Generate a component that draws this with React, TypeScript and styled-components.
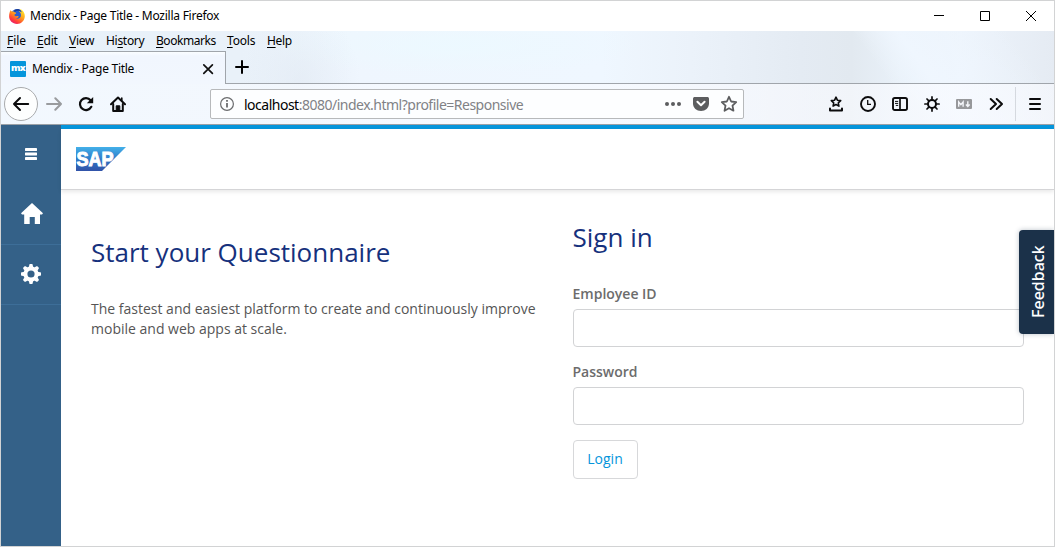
import React from "react";
import styled, { createGlobalStyle } from "styled-components";

const GlobalStyle = createGlobalStyle`
  *, *::before, *::after { box-sizing: border-box; }
  body { margin: 0; background: #fff; font-family: "Open Sans", "Noto Sans", sans-serif; }
  h1, h2, p { margin: 0; }
  svg { display: block; }
`;

const BrowserWindow = styled.div`
  width: 1055px;
  height: 547px;
  border: 1px solid #d2d3d4;
  display: flex;
  flex-direction: column;
  overflow: hidden;
  background: #fff;
`;

const TitleBar = styled.div`
  height: 30px;
  display: flex;
  align-items: center;
  padding-left: 8px;
  font: 12px/16px "Noto Sans", sans-serif;
  letter-spacing: -0.25px;
  color: #000;
`;

const TitleText = styled.span`
  flex: 1;
  padding-left: 5px;
`;

const WindowButton = styled.span`
  width: 46px;
  height: 30px;
  display: flex;
  align-items: center;
  justify-content: center;
`;

const Chrome = styled.div`
  height: 94px;
  display: flex;
  flex-direction: column;
  border-bottom: 1px solid #9ba0a6;
  background:
    radial-gradient(ellipse 60px 70px at 300px 50px, rgba(220, 228, 238, 0.4), transparent),
    radial-gradient(ellipse 190px 30px at 455px 14px, rgba(236, 249, 255, 0.9), transparent),
    linear-gradient(54deg, transparent 0 82%, rgba(240, 247, 255, 0.85) 86%, transparent 96%) 0 0 / 1053px 94px no-repeat,
    linear-gradient(90deg, #e8f1f9 0, #e9f1f9 240px, #eff6fe 350px, #eff7ff 600px, #ebf2fa 690px, #e4ebf3 800px, #e2e9f0 850px, #e9f1f9 900px, #edf4fc 960px, #e5ebf3 1053px);
`;

const MenuBar = styled.div`
  height: 20px;
  display: flex;
  align-items: center;
  padding-left: 6px;
  gap: 12px;
  font: 12px/20px "Noto Sans", sans-serif;
  color: #000;
`;

const MenuItem = styled.span<{ $width: number; $spacing: number }>`
  width: ${(p) => p.$width}px;
  letter-spacing: ${(p) => p.$spacing}px;
  white-space: nowrap;
  u { text-underline-offset: 2px; text-decoration-thickness: 1px; }
`;

const TabStrip = styled.div`
  height: 33px;
  display: flex;
`;

const Tab = styled.div`
  width: 225px;
  height: 33px;
  display: flex;
  align-items: center;
  padding: 1px 11px 0 9px;
  border-top: 1px solid #a0a5ab;
  border-right: 1px solid #a0a5ab;
  background: linear-gradient(#fafdff 0, #f1f6fe 4px, #f2f7fe);
  font: 12px/16px "Noto Sans", sans-serif;
  letter-spacing: -0.27px;
`;

const Favicon = styled.span`
  width: 16px;
  height: 16px;
  border-radius: 1px;
  background: #0595db;
  color: #fff;
  font: 800 9.5px/14px "Open Sans", sans-serif;
  letter-spacing: -0.7px;
  text-align: center;
`;

const TabTitle = styled.span`
  flex: 1;
  padding-left: 6px;
`;

const TabSpace = styled.div`
  flex: 1;
  border-bottom: 1px solid #a0a5ab;
  padding: 8px 0 0 8px;
`;

const Toolbar = styled.div`
  height: 40px;
  display: flex;
  align-items: center;
  padding-left: 3px;
  background: linear-gradient(90deg, rgba(244, 249, 255, 0.85) 0, rgba(250, 251, 255, 0.65) 700px, rgba(250, 251, 255, 0.6));
`;

const BackButton = styled.span`
  width: 34px;
  height: 34px;
  border-radius: 50%;
  border: 1px solid #a9abad;
  background: #fdfefe;
  display: flex;
  align-items: center;
  justify-content: center;
`;

const ToolButton = styled.span<{ $color?: string }>`
  width: 32px;
  height: 32px;
  display: flex;
  align-items: center;
  justify-content: center;
  color: ${(p) => p.$color ?? "#0c0c0d"};
`;

const UrlBar = styled.div`
  width: 534px;
  height: 30px;
  margin: 0 76px 0 76px;
  border: 1px solid #b7b9bb;
  border-radius: 2px;
  background: #fdfeff;
  display: flex;
  align-items: center;
  padding: 0 0 0 8px;
`;

const Address = styled.span`
  flex: 1;
  padding: 2px 0 0 9px;
  font: 14px/20px "Noto Sans", sans-serif;
  letter-spacing: -0.5px;
  color: #818286;
  b { font-weight: 400; color: #000; }
`;

const UrlAction = styled.span`
  width: 28px;
  display: flex;
  justify-content: center;
`;

const Divider = styled.span`
  width: 1px;
  height: 34px;
  margin: 0 3px;
  background: #d5d9df;
`;

const Page = styled.div`
  position: relative;
  flex: 1;
  display: flex;
`;

const Sidebar = styled.nav`
  width: 60px;
  background: #346188;
`;

const SideItem = styled.div<{ $line?: boolean }>`
  height: 60px;
  display: flex;
  align-items: center;
  justify-content: center;
  padding-bottom: 1px;
  border-bottom: 1px solid ${(p) => (p.$line ? "#3d6e98" : "transparent")};
`;

const Main = styled.main`
  flex: 1;
  display: flex;
  flex-direction: column;
  border-top: 4px solid #0595db;
`;

const PageHeader = styled.header`
  height: 61px;
  padding: 18px 15px;
  border-bottom: 1px solid #d5d5d7;
  box-shadow: 0 2px 4px rgba(0, 0, 0, 0.09);
`;

const Columns = styled.div`
  display: grid;
  grid-template-columns: 451px 451.5px;
  column-gap: 30.5px;
  padding: 29px 30px 0 30px;
`;

const Intro = styled.section`
  padding-top: 15px;
`;

const Heading = styled.h1`
  font: 400 26px/36px "Open Sans", sans-serif;
  letter-spacing: 0;
  color: #16317d;
`;

const Lead = styled.p`
  padding-top: 29px;
  white-space: nowrap;
  font-size: 14px;
  line-height: 20px;
  color: #555;
`;

const Field = styled.label`
  display: block;
  margin-bottom: 15px;
  font-size: 14px;
  font-weight: 600;
  line-height: 20px;
  color: #6c6c6c;
`;

const Input = styled.input`
  display: block;
  width: 451.5px;
  height: 38px;
  margin-top: 5px;
  border: 1px solid #d2d3d5;
  border-radius: 4px;
  background: #fff;
`;

const Form = styled.form`
  h1 { margin-bottom: 29px; }
`;

const LoginButton = styled.button`
  width: 65px;
  height: 39px;
  padding: 0 0 2px;
  border: 1px solid #d7d8da;
  border-radius: 4px;
  background: #fff;
  color: #0595db;
  font: 14px/20px "Open Sans", sans-serif;
`;

const FeedbackTab = styled.div`
  position: absolute;
  right: 0;
  top: 105px;
  width: 35px;
  height: 104px;
  padding-right: 2px;
  background: #1b3149;
  box-shadow: 0 0 5px rgba(27, 49, 73, 0.3);
  color: #fff;
  display: flex;
  align-items: center;
  justify-content: center;
  writing-mode: vertical-rl;
  transform: rotate(180deg);
  border-radius: 0 4px 4px 0;
  font: 500 16px/24px "Noto Sans", sans-serif;
`;

const FirefoxLogo = () => (
  <svg width="16" height="16" viewBox="0 0 16 16">
    <defs>
      <linearGradient id="fox" x1="0.8" y1="0.1" x2="0.2" y2="1">
        <stop offset="0" stopColor="#ffe226" />
        <stop offset="0.4" stopColor="#ff9a1c" />
        <stop offset="0.75" stopColor="#ff3b3b" />
        <stop offset="1" stopColor="#e3157a" />
      </linearGradient>
    </defs>
    <circle cx="8" cy="7" r="6" fill="#2a5fd0" />
    <path d="M1.5 2C2 3 2.5 3.4 3.2 3.5 4.6 3.3 5.5 3.8 6 4.6 7 4.3 7.3 5 7 5.5L5.5 6.6C5.3 8 6.5 8.6 7.8 8.1 9 7.7 9.6 8 9.7 8.5 9.4 9.6 8 10.4 6.8 10.2 9 11.5 12 10 12 7.2 12 5.2 11 3.8 9.5 2.7 11 2.8 12.3 3.7 12.8 4.6 12.6 3 11.6 1.5 10.5.7 14 2 16 5 15.8 8.5 15.5 12.8 12.2 16 8 16 3.5 16 .1 12.5.1 8.3.1 5.8.7 3.8 1.5 2Z" fill="url(#fox)" />
    <path d="M5 3C6 1.4 8 .7 10 1.3 11.4 2 12.2 3 12.5 4.2 10 2.3 7.5 2.4 6 4Z" fill="#1b3f96" />
  </svg>
);

const Star = ({ size = 18 }: { size?: number }) => (
  <svg width={size} height={size} viewBox="0 0 18 18" fill="none" stroke="#5c5d5f" strokeWidth="1.8" strokeLinejoin="round">
    <path d="M9 1.8l2.15 4.7 5.05.6-3.7 3.5.95 5.1L9 13.2l-4.45 2.5.95-5.1-3.7-3.5 5.05-.6z" />
  </svg>
);

const SapLogo = () => (
  <svg width="50" height="24" viewBox="0 0 50 24">
    <defs>
      <linearGradient id="sap" x1="0" y1="0" x2="0" y2="1">
        <stop offset="0" stopColor="#43b0e9" />
        <stop offset="0.5" stopColor="#2f7bc9" />
        <stop offset="1" stopColor="#3153a8" />
      </linearGradient>
    </defs>
    <path d="M0 0H50L26 24H0Z" fill="url(#sap)" />
    <text x="0.6" y="18.7" textLength="37" lengthAdjust="spacingAndGlyphs" fill="#fff" stroke="#fff" strokeWidth="1" fontFamily="Liberation Sans, sans-serif" fontWeight="700" fontSize="19.5">SAP</text>
  </svg>
);

const gearPath = Array.from({ length: 8 }, (_, i) => i * 45);

const menus: { pre: string; key: string; post: string; width: number; spacing: number }[] = [
  { pre: "", key: "F", post: "ile", width: 18, spacing: -0.1 },
  { pre: "", key: "E", post: "dit", width: 20, spacing: -0.2 },
  { pre: "", key: "V", post: "iew", width: 25, spacing: -0.3 },
  { pre: "Hi", key: "s", post: "tory", width: 38, spacing: -0.3 },
  { pre: "", key: "B", post: "ookmarks", width: 59, spacing: -0.45 },
  { pre: "", key: "T", post: "ools", width: 28, spacing: -0.2 },
  { pre: "", key: "H", post: "elp", width: 25, spacing: -0.3 },
];

export default function App() {
  return (
    <BrowserWindow>
      <GlobalStyle />
      <TitleBar>
        <FirefoxLogo />
        <TitleText>Mendix - Page Title - Mozilla Firefox</TitleText>
        <WindowButton>
          <svg width="10" height="10" stroke="#000"><path d="M0 4.5h10" /></svg>
        </WindowButton>
        <WindowButton>
          <svg width="10" height="10" stroke="#000" fill="none"><path d="M.5.5h9v9h-9z" /></svg>
        </WindowButton>
        <WindowButton>
          <svg width="10" height="10" stroke="#000"><path d="M0 0l10 10M10 0L0 10" /></svg>
        </WindowButton>
      </TitleBar>
      <Chrome>
        <MenuBar>
          {menus.map((m) => (
            <MenuItem key={m.post} $width={m.width} $spacing={m.spacing}>
              {m.pre}<u>{m.key}</u>{m.post}
            </MenuItem>
          ))}
        </MenuBar>
        <TabStrip>
          <Tab>
            <Favicon>mx</Favicon>
            <TabTitle>Mendix - Page Title</TabTitle>
            <svg width="12" height="12" stroke="#111" strokeWidth="1.7" strokeLinecap="round"><path d="M1.8 1.8l8.6 8.6M10.4 1.8L1.8 10.4" /></svg>
          </Tab>
          <TabSpace>
            <svg width="16" height="16" stroke="#000" strokeWidth="2" strokeLinecap="round"><path d="M8 2v12M2 8h12" /></svg>
          </TabSpace>
        </TabStrip>
        <Toolbar>
          <BackButton>
            <svg width="18" height="16" fill="none" stroke="#0c0c0d" strokeWidth="2" strokeLinecap="round" strokeLinejoin="round"><path d="M16.2 8H2M8 2L2 8l6 6" /></svg>
          </BackButton>
          <ToolButton $color="#999b9e">
            <svg width="16" height="16" fill="none" stroke="currentColor" strokeWidth="2" strokeLinecap="round" strokeLinejoin="round"><path d="M1 8h14M9.3 2.3L15 8l-5.7 5.7" /></svg>
          </ToolButton>
          <ToolButton>
            <svg width="16" height="16" fill="none" stroke="currentColor" strokeWidth="2.2"><path d="M13.3 10.8A6 6 0 1 1 12.6 4.2" strokeLinecap="round" /><path d="M15.2 1v6.3H8.8z" fill="currentColor" stroke="none" /></svg>
          </ToolButton>
          <ToolButton>
            <svg width="16" height="16" fill="none" stroke="currentColor" strokeWidth="2" strokeLinejoin="round" strokeLinecap="round"><path d="M1 8.2L8 1.5l7 6.7" /><path d="M3.2 8v7h9.6V8" /><path d="M6.2 15V9.8h3.6V15" fill="currentColor" strokeWidth="1" /><path d="M11.8 2v2.5" strokeWidth="1.6" /></svg>
          </ToolButton>
          <UrlBar>
            <svg width="16" height="16" fill="none" stroke="#6b6c6e"><circle cx="8" cy="8" r="6.4" strokeWidth="1.2" /><path d="M8 7v4.5M8 4v1.7" strokeWidth="1.8" /></svg>
            <Address><b>localhost</b>:8080/index.html?profile=Responsive</Address>
            <UrlAction>
              <svg width="16" height="16" fill="#5c5d5f"><circle cx="2" cy="8" r="2" /><circle cx="8" cy="8" r="2" /><circle cx="14" cy="8" r="2" /></svg>
            </UrlAction>
            <UrlAction>
              <svg width="16" height="16"><path d="M1.8 1h12.4C15.3 1 16 1.7 16 2.7v4.8c0 4.4-3.6 7.5-8 7.5s-8-3.1-8-7.5V2.7C0 1.7.7 1 1.8 1z" fill="#5c5d5f" /><path d="M4.4 5.7L8 9.2l3.6-3.5" fill="none" stroke="#fff" strokeWidth="2" strokeLinecap="round" strokeLinejoin="round" /></svg>
            </UrlAction>
            <UrlAction><Star /></UrlAction>
          </UrlBar>
          <ToolButton>
            <svg width="16" height="16" fill="none" stroke="currentColor" strokeWidth="1.6" strokeLinejoin="round"><path d="M8 1.2l1.4 3 3.3.4-2.4 2.2.6 3.3L8 8.5l-2.9 1.6.6-3.3-2.4-2.2 3.3-.4z" /><path d="M2 12.6v1.9h12v-1.9" strokeWidth="2" strokeLinecap="round" /></svg>
          </ToolButton>
          <ToolButton>
            <svg width="16" height="16" fill="none" stroke="currentColor"><circle cx="8" cy="8" r="7" strokeWidth="1.9" /><path d="M7.7 4v4.4H11" strokeWidth="1.3" /></svg>
          </ToolButton>
          <ToolButton>
            <svg width="16" height="16" fill="none" stroke="currentColor"><rect x="1" y="2" width="14" height="12" rx="1.8" strokeWidth="1.9" /><path d="M8 2v12" strokeWidth="1.7" /><path d="M3 5.4h3.2M3 7.4h3.2M3.8 9.4h2.4" /></svg>
          </ToolButton>
          <ToolButton>
            <svg width="16" height="16" viewBox="-8 -8 16 16" fill="none" stroke="currentColor" strokeWidth="2">
              <circle r="4" />
              {gearPath.map((a) => <path key={a} d="M0-4.5V-7.1" strokeLinecap="round" strokeWidth="1.7" transform={`rotate(${a})`} />)}
            </svg>
          </ToolButton>
          <ToolButton $color="#97989b">
            <svg width="16" height="16"><rect y="3" width="16" height="10" rx="1" fill="currentColor" /><path d="M2.7 10.7V6l2.2 2.6L7.1 6v4.7M11.8 5.3v4.8M9.9 8.4l1.9 2 1.9-2" fill="none" stroke="#f4f6fa" strokeWidth="1.4" /></svg>
          </ToolButton>
          <ToolButton>
            <svg width="16" height="16" fill="none" stroke="currentColor" strokeWidth="2" strokeLinecap="round" strokeLinejoin="round"><path d="M2.7 3L8 8l-5.3 5M8.7 3L14 8l-5.3 5" /></svg>
          </ToolButton>
          <Divider />
          <ToolButton>
            <svg width="14" height="14" stroke="currentColor" strokeWidth="2" strokeLinecap="round"><path d="M2 2h10M2 7h10M2 12h10" /></svg>
          </ToolButton>
        </Toolbar>
      </Chrome>
      <Page>
        <Sidebar>
          <SideItem>
            <svg width="12" height="12" fill="#fff"><rect width="12" height="3" rx=".4" /><rect y="4.5" width="12" height="3" rx=".4" /><rect y="9" width="12" height="3" rx=".4" /></svg>
          </SideItem>
          <SideItem $line>
            <svg width="22" height="22" viewBox="-1 0 22 22" fill="#fff" overflow="visible"><path d="M11 0l11 10.3-1 1.2h-2V21h-5.2v-7H8.7v7H3.2v-9.5H1L0 10.3z" /></svg>
          </SideItem>
          <SideItem $line>
            <svg width="20" height="20" viewBox="-10 -10 20 20" fill="#fff">
              <circle r="5.6" fill="none" stroke="#fff" strokeWidth="4" />
              {gearPath.map((a) => <path key={a} d="M-2.3-6.8L-1.4-10H1.4L2.3-6.8z" transform={`rotate(${a})`} />)}
            </svg>
          </SideItem>
        </Sidebar>
        <Main>
          <PageHeader><SapLogo /></PageHeader>
          <Columns>
            <Intro>
              <Heading>Start your Questionnaire</Heading>
              <Lead>
                The fastest and easiest platform to create and continuously improve<br />
                mobile and web apps at scale.
              </Lead>
            </Intro>
            <Form>
              <Heading>Sign in</Heading>
              <Field>Employee ID<Input /></Field>
              <Field>Password<Input type="password" /></Field>
              <LoginButton type="button">Login</LoginButton>
            </Form>
          </Columns>
        </Main>
        <FeedbackTab>Feedback</FeedbackTab>
      </Page>
    </BrowserWindow>
  );
}
